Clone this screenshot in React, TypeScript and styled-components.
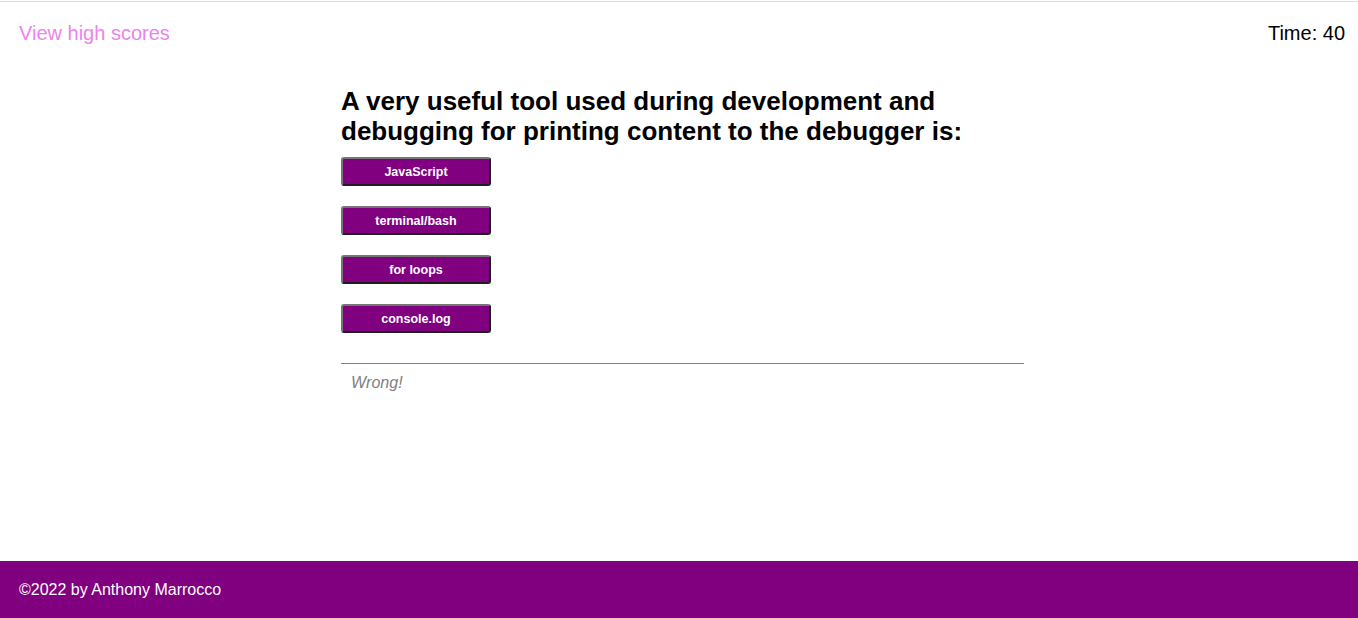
import React from "react";
import styled, { createGlobalStyle } from "styled-components";

const Global = createGlobalStyle`
  html, body { margin: 0; padding: 0; background: #fff; }
  body { font-family: "Liberation Sans", Arial, sans-serif; }
  #root { padding-top: 1px; }
`;

const Page = styled.div`
  min-height: calc(100vh - 1px);
  display: flex;
  flex-direction: column;
  border-top: 1px solid #dcdcdc;
  box-sizing: border-box;
`;

const Header = styled.header`
  display: flex;
  justify-content: space-between;
  align-items: center;
  height: 62px;
  padding: 0 13px 0 19px;
  font-size: 20px;
`;

const HighScores = styled.a`
  color: #ee82ee;
  text-decoration: none;
  cursor: pointer;
`;

const Timer = styled.span`
  color: #000;
`;

const Main = styled.main`
  flex: 1;
  padding: 22px 334px 0 341px;
`;

const Question = styled.h2`
  margin: 0 0 11px;
  font-size: 26px;
  line-height: 30px;
  font-weight: bold;
  color: #000;
`;

const Choices = styled.div`
  display: flex;
  flex-direction: column;
  align-items: flex-start;
  gap: 20px;
`;

const Choice = styled.button`
  width: 150px;
  height: 29px;
  background: #800080;
  color: #fff;
  font-family: "Liberation Sans", Arial, sans-serif;
  font-size: 12.5px;
  font-weight: bold;
  border: 2px solid;
  border-color: #767676 #1e1e1e #1e1e1e #767676;
  border-radius: 3px;
  padding: 0;
  cursor: pointer;
`;

const Result = styled.div`
  margin-top: 30px;
  border-top: 1px solid #808080;
  padding: 10px 10px;
  font-style: italic;
  font-size: 16px;
  color: #808080;
`;

const Footer = styled.footer`
  height: 57px;
  background: #800080;
  color: #fff;
  display: flex;
  align-items: center;
  padding: 0 19px;
  font-size: 16px;
`;

const choices = ["JavaScript", "terminal/bash", "for loops", "console.log"];

export default function App() {
  return (
    <>
      <Global />
      <Page>
        <Header>
          <HighScores>View high scores</HighScores>
          <Timer>Time: 40</Timer>
        </Header>
        <Main>
          <Question>
            A very useful tool used during development and debugging for printing content to the debugger is:
          </Question>
          <Choices>
            {choices.map((c) => (
              <Choice key={c}>{c}</Choice>
            ))}
          </Choices>
          <Result>Wrong!</Result>
        </Main>
        <Footer>©2022 by Anthony Marrocco</Footer>
      </Page>
    </>
  );
}
